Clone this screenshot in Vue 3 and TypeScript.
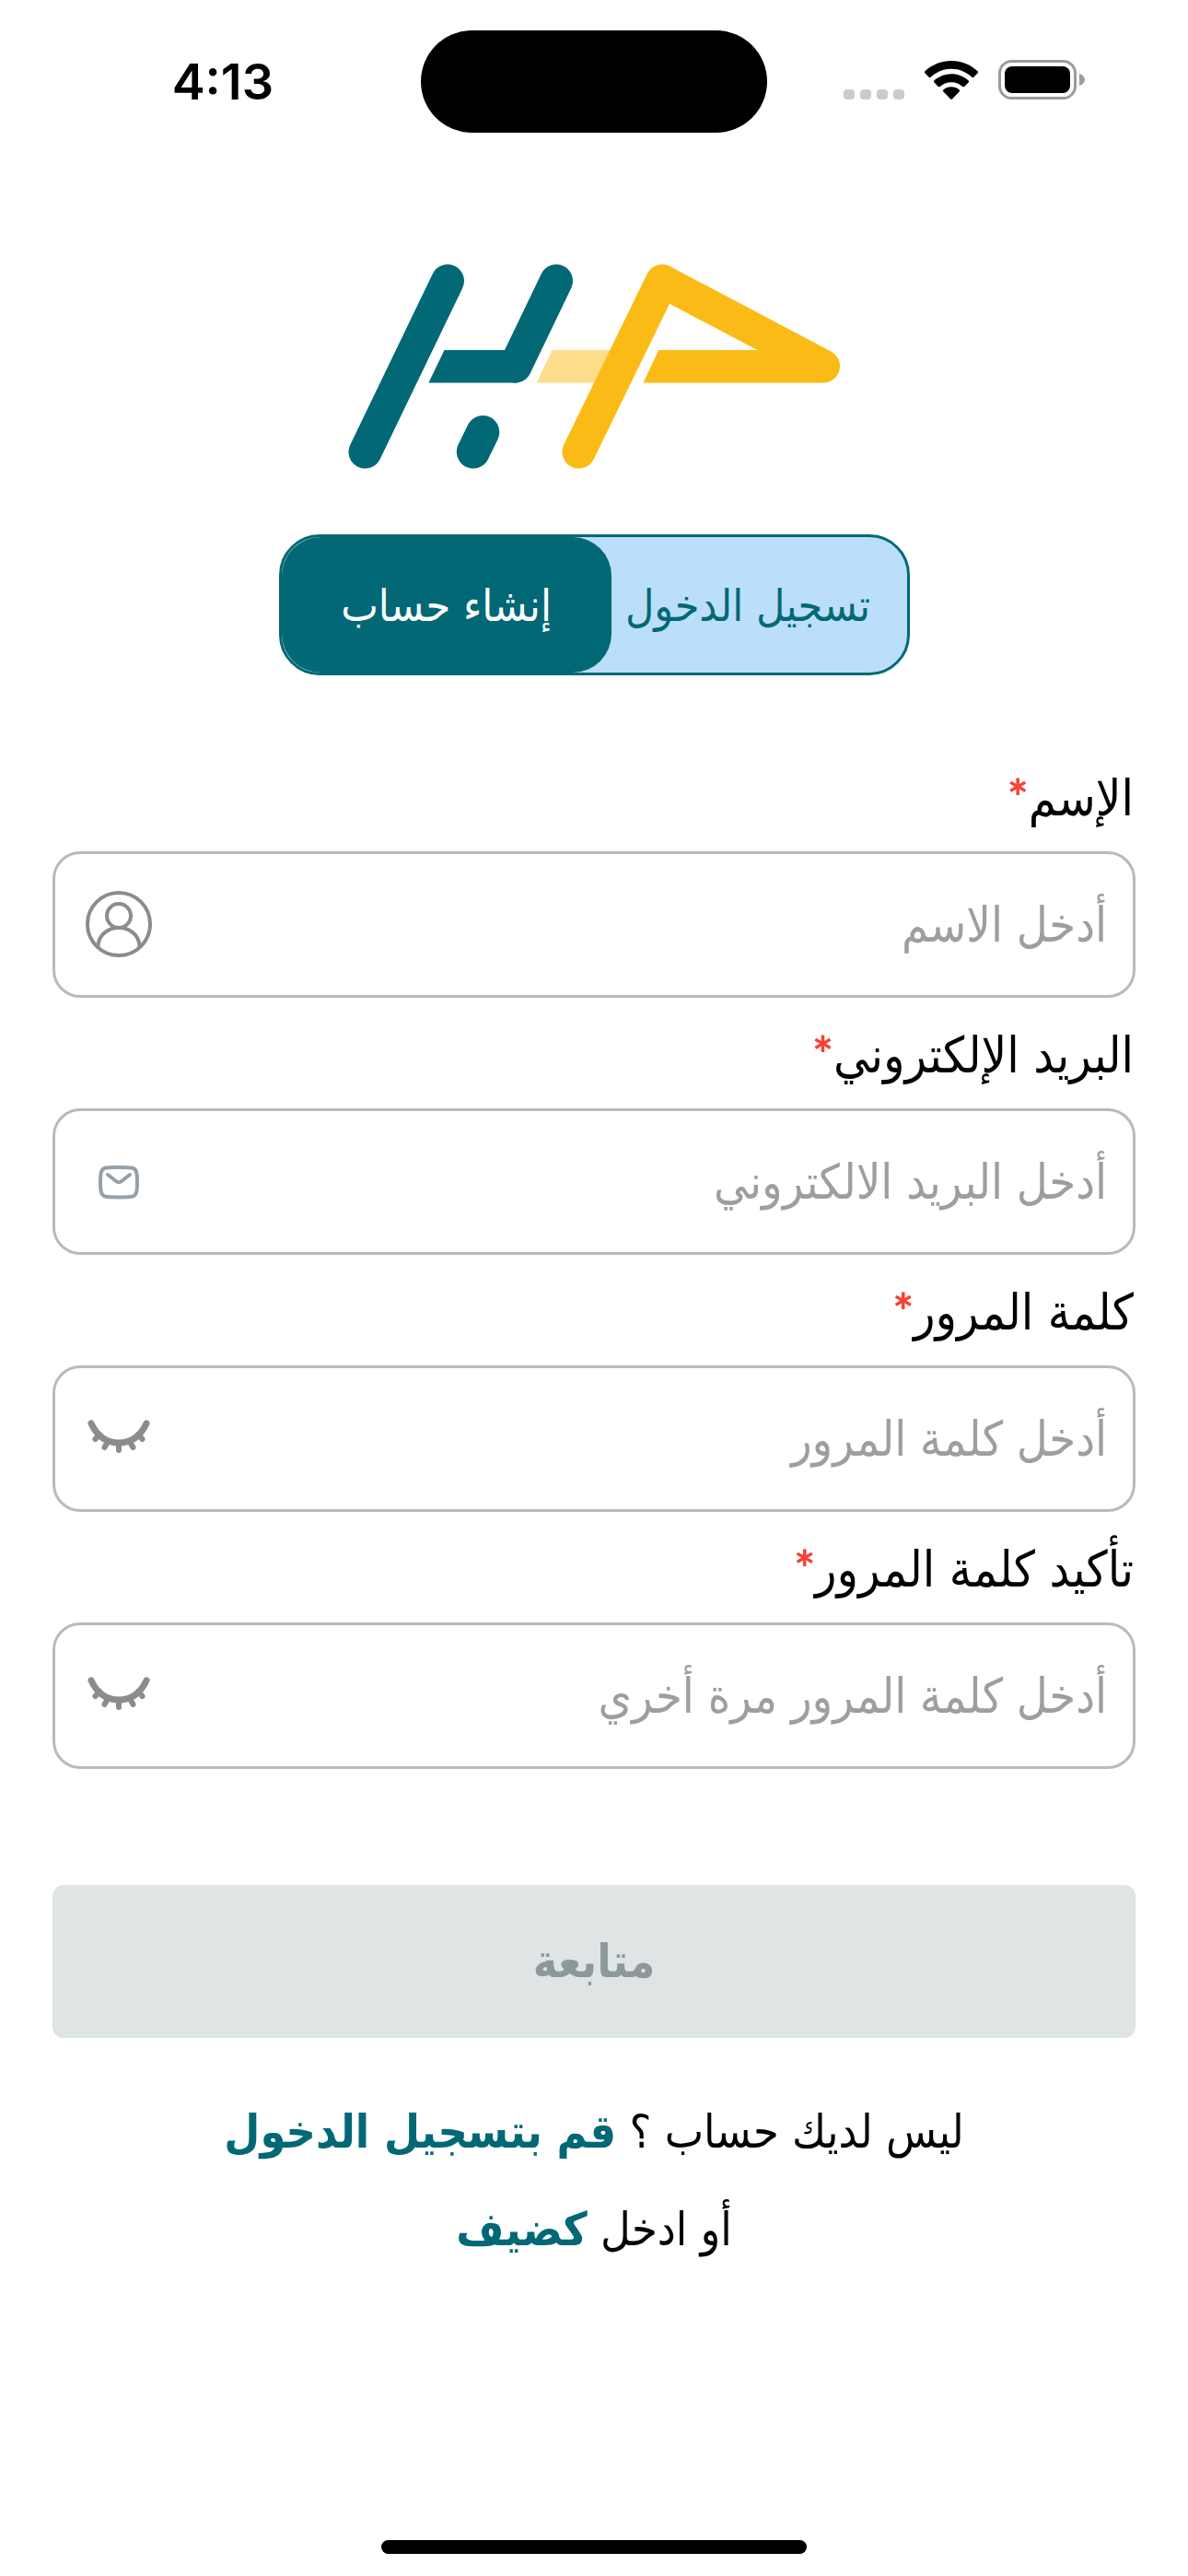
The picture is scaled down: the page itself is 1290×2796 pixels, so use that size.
<script setup lang="ts">
import { reactive, ref } from 'vue'

type IconName = 'user' | 'mail' | 'eye'

interface Field {
  id: string
  label: string
  placeholder: string
  type: string
  icon: IconName
}

const fields: Field[] = [
  { id: 'name', label: 'الإسم', placeholder: 'أدخل الاسم', type: 'text', icon: 'user' },
  { id: 'email', label: 'البريد الإلكتروني', placeholder: 'أدخل البريد الالكتروني', type: 'email', icon: 'mail' },
  { id: 'password', label: 'كلمة المرور', placeholder: 'أدخل كلمة المرور', type: 'password', icon: 'eye' },
  { id: 'confirm', label: 'تأكيد كلمة المرور', placeholder: 'أدخل كلمة المرور مرة أخري', type: 'password', icon: 'eye' },
]

const values = reactive<Record<string, string>>({ name: '', email: '', password: '', confirm: '' })
const revealed = reactive<Record<string, boolean>>({})
const tab = ref<'login' | 'signup'>('signup')

const inputType = (field: Field): string => (revealed[field.id] ? 'text' : field.type)
</script>

<template>
  <div class="screen" dir="rtl" lang="ar">
    <header class="status" dir="ltr">
      <span class="time">4:13</span>
      <span class="island"></span>
      <div class="indicators">
        <svg class="dots" width="66" height="42" viewBox="0 0 66 42" aria-hidden="true">
          <g fill="#cbcbcb">
            <rect x="0" y="31" width="12" height="11" rx="4" />
            <rect x="18" y="31" width="12" height="11" rx="4" />
            <rect x="36" y="31" width="12" height="11" rx="4" />
            <rect x="54" y="31" width="12" height="11" rx="4" />
          </g>
        </svg>
        <svg class="wifi" width="60" height="42" viewBox="0 0 60 42" aria-hidden="true">
          <path d="M30 0C41 0 51 4.300 58.500 11.200c.7.700.7 1.500 0 2.200l-4.200 4.300c-.6.600-1.400.6-2 0C46.300 12.200 38.600 8.800 30 8.800S13.700 12.200 7.700 17.700c-.6.600-1.400.6-2 0L1.500 13.400c-.7-.7-.7-1.500 0-2.200C9 4.300 19 0 30 0Z" />
          <path d="M30 14.200c7.200 0 13.700 2.700 18.600 7.200.7.600.7 1.500 0 2.200l-4.400 4.300c-.6.600-1.400.6-2 .1C38.900 25 34.700 23.200 30 23.200S21.100 25 17.800 28c-.6.500-1.400.5-2-.1l-4.400-4.300c-.7-.7-.7-1.600 0-2.200C16.300 16.900 22.800 14.200 30 14.200Z" />
          <path d="M30 28.300c3.300 0 6.300 1.200 8.600 3.100.7.600.7 1.500 0 2.100l-7.500 7.800c-.6.700-1.600.7-2.200 0l-7.500-7.800c-.7-.6-.7-1.500 0-2.100 2.300-1.900 5.300-3.100 8.600-3.100Z" />
        </svg>
        <svg class="battery" width="95" height="43" viewBox="0 0 95 43" aria-hidden="true">
          <rect x="1.500" y="1.500" width="82" height="40" rx="13" fill="none" stroke="#9b9b9b" stroke-width="3" />
          <rect x="7" y="7" width="71" height="29" rx="8" />
          <path d="M88 15c4 1.500 6 4 6 6.500S92 26.500 88 28Z" fill="#9b9b9b" />
        </svg>
      </div>
    </header>

    <main class="content">
      <svg class="logo" viewBox="0 0 534 223" role="img" aria-label="حبر">
        <g stroke="#026875" fill="#026875" stroke-width="36" stroke-linecap="round">
          <path d="M108 19L18.500 204.500" />
          <path d="M226 19L181.500 111.500" />
          <path d="M146.300 183L135.800 204.500" />
          <path d="M104.500 94H184V129.500H87.400Z" stroke="none" />
        </g>
        <path d="M221.600 94H300L284 129.500H204.700Z" fill="#fcdd8a" />
        <path d="M250.500 204.500L341 19L516 111.500" fill="none" stroke="#fbbb17" stroke-width="36" stroke-linecap="round" stroke-linejoin="round" />
        <path d="M337.200 94H444L516 93.500V129.500H320.500Z" fill="#fbbb17" />
      </svg>

      <div class="tabs" role="tablist">
        <button class="tab login" :class="{ active: tab === 'login' }" type="button" role="tab" @click="tab = 'login'">تسجيل الدخول</button>
        <button class="tab signup" :class="{ active: tab === 'signup' }" type="button" role="tab" @click="tab = 'signup'">إنشاء حساب</button>
      </div>

      <form class="form" @submit.prevent>
        <div v-for="field in fields" :key="field.id" class="field">
          <label class="label" :for="field.id">{{ field.label }}<span class="star">*</span></label>
          <div class="box">
            <input :id="field.id" v-model="values[field.id]" class="input" dir="rtl" :type="inputType(field)" :placeholder="field.placeholder" />
            <svg v-if="field.icon === 'user'" class="icon" viewBox="0 0 72 72" fill="none" stroke="#8c8c8c" stroke-width="4" aria-hidden="true">
              <circle cx="36" cy="35" r="34" />
              <circle cx="36" cy="26" r="13" />
              <path d="M13.500 60C13.500 47 24 39 36 39S58.500 47 58.500 60" />
            </svg>
            <svg v-else-if="field.icon === 'mail'" class="icon" viewBox="0 0 72 72" fill="none" stroke="#96a0a8" stroke-width="4" stroke-linecap="round" stroke-linejoin="round" aria-hidden="true">
              <path d="M36 20C44 20 48.500 20.200 50.800 20.800C54.600 21.800 56 24.600 56 36.200S54.600 50.600 50.800 51.600C48.500 52.200 44 52.400 36 52.400S23.500 52.200 21.200 51.600C17.400 50.600 16 47.800 16 36.200S17.400 21.800 21.200 20.800C23.500 20.200 28 20 36 20Z" />
              <path d="M24 28L33 35Q36 37.500 39 35L48 28" />
            </svg>
            <button v-else class="reveal" type="button" aria-label="إظهار كلمة المرور" @click="revealed[field.id] = !revealed[field.id]">
              <svg class="icon" viewBox="0 0 72 72" fill="none" stroke="#8c8c8c" stroke-width="6" stroke-linecap="round" aria-hidden="true">
                <path d="M6 19C13 34 24 40 36 40S59 34 66 19" stroke-width="7" />
                <path d="M15 31L10.500 36M24.500 38L20.500 45M36 41V48M47.500 38L51.500 45M57 31L61.500 36" />
              </svg>
            </button>
          </div>
        </div>
        <button class="submit" type="submit" disabled>متابعة</button>
      </form>

      <div class="links">
        <p class="line">ليس لديك حساب ؟ <a class="link" href="#login">قم بتسجيل الدخول</a></p>
        <p class="line">أو ادخل <a class="link" href="#guest">كضيف</a></p>
      </div>
    </main>

    <div class="home"></div>
  </div>
</template>

<style>
body {
  background: #fff;
}
</style>

<style scoped>
.screen {
  display: flex;
  flex-direction: column;
  min-height: 100vh;
  box-sizing: border-box;
  padding-bottom: 24px;
  background: #fff;
  color: #000;
  font-family: "DejaVu Sans Condensed", "DejaVu Sans", sans-serif;
  font-size: 50px;
  line-height: 60px;
}

.status {
  display: grid;
  grid-template-columns: 1fr 376px 1fr;
  align-items: center;
  padding-top: 33px;
}

.time {
  justify-self: end;
  padding-right: 160px;
  font-family: Inter, sans-serif;
  font-size: 54px;
  font-weight: 600;
}

.island {
  height: 111px;
  border-radius: 56px;
  background: #000;
}

.indicators {
  display: flex;
  align-items: center;
  padding: 0 0 4px 83px;
}

.wifi {
  margin-left: 21px;
}

.battery {
  margin-left: 21px;
}

.content {
  display: flex;
  flex-direction: column;
  align-items: center;
  flex: 1;
  padding: 142px 57px 0;
}

.logo {
  width: 534px;
  height: 223px;
}

.tabs {
  display: flex;
  box-sizing: border-box;
  width: 685px;
  height: 153px;
  margin-top: 71px;
  border: 3px solid #026875;
  border-radius: 44px;
  background: #bbdefb;
}

.tab {
  padding: 0;
  border: 0;
  border-radius: 42px;
  background: none;
  color: #026875;
  font: inherit;
  font-size: 48px;
  white-space: nowrap;
}

.login {
  flex: 1;
  padding-right: 24px;
}

.signup {
  flex: 0 0 358px;
}

.active {
  background: #026875;
  color: #fff;
}

.form {
  width: 100%;
  margin-top: 104px;
}

.field {
  margin-bottom: 33px;
}

.label {
  display: block;
  margin-bottom: 27px;
  padding-right: 2px;
  font-size: 54px;
}

.star {
  color: #f44336;
  font-family: Lato, sans-serif;
  font-size: 54px;
  font-weight: 900;
  line-height: 1;
}

.box {
  display: flex;
  align-items: center;
  box-sizing: border-box;
  height: 159px;
  padding: 0 28px 0 33px;
  border: 3px solid #b7bbc0;
  border-radius: 30px;
}

.input {
  flex: 1;
  min-width: 0;
  height: 100%;
  padding: 0;
  border: 0;
  outline: 0;
  background: none;
  color: #000;
  font: inherit;
  font-size: 52px;
  text-align: right;
}

/* the hamza rises above the font's line box, so it must not be clipped */
.input::placeholder {
  padding: 16px 0;
  overflow: visible;
  color: #9e9e9e;
  opacity: 1;
}

.icon {
  display: block;
  width: 72px;
  height: 72px;
  overflow: visible;
}

.reveal {
  padding: 0;
  border: 0;
  background: none;
}

.submit {
  display: block;
  width: 100%;
  height: 166px;
  margin-top: 126px;
  border: 0;
  border-radius: 12px;
  background: #dfe4e4;
  color: #8c999a;
  font: inherit;
  font-weight: 700;
}

.links {
  margin-top: 72px;
  text-align: center;
}

.line {
  margin: 0 0 46px;
}

.link {
  color: #026875;
  font-weight: 700;
  text-decoration: none;
}

.home {
  align-self: center;
  width: 462px;
  height: 15px;
  border-radius: 8px;
  background: #000;
}
</style>
